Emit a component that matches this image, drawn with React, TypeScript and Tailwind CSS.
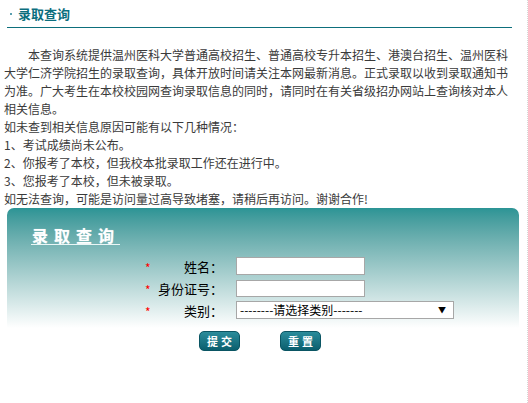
import React from "react";

const cjk = { fontFamily: '"Noto Sans CJK SC", "Noto Sans", sans-serif' };

function Row({ label, children }: { label: string; children: React.ReactNode }) {
  return (
    <div className="flex items-center h-[22px] pl-[138px]">
      <span className="w-[10px] text-[12px] text-[#ff0000] leading-none pt-[3px]">*</span>
      <span className="w-[68px] text-right text-[13px] text-black leading-none">{label}</span>
      <div className="ml-[13px] flex items-center">{children}</div>
    </div>
  );
}

export default function App() {
  return (
    <div
      className="w-[528px] h-[403px] bg-white border-r border-dotted border-[#d6d6d6] overflow-hidden"
      style={cjk}
    >
      {/* header */}
      <div className="pl-[7px]">
        <div className="h-[27px] flex items-center w-[505px]">
          <span className="ml-[3px] w-[2px] h-[2px] bg-[#5a9fb0] mt-[1px]" />
          <span className="ml-[6px] text-[13px] font-bold text-[#0b6e7e] leading-none">
            录取查询
          </span>
        </div>
        <div className="w-[505px] h-[1px] bg-[#0d6f7c]" />
      </div>

      {/* body text */}
      <div className="w-[512px] pl-[4px] pt-[18px] text-[12px] leading-[18px] text-[#3a3a3a]">
        <p className="indent-[24px]">
          本查询系统提供温州医科大学普通高校招生、普通高校专升本招生、港澳台招生、温州医科大学仁济学院招生的录取查询，具体开放时间请关注本网最新消息。正式录取以收到录取通知书为准。广大考生在本校校园网查询录取信息的同时，请同时在有关省级招办网站上查询核对本人相关信息。
        </p>
        <p>如未查到相关信息原因可能有以下几种情况：</p>
        <p>1、考试成绩尚未公布。</p>
        <p>2、你报考了本校，但我校本批录取工作还在进行中。</p>
        <p>3、您报考了本校，但未被录取。</p>
        <p>如无法查询，可能是访问量过高导致堵塞，请稍后再访问。谢谢合作!</p>
      </div>

      {/* panel */}
      <div className="ml-[7px] w-[512px] h-[120px] rounded-t-[7px] bg-gradient-to-b from-[#2b9495] to-[#ffffff]">
        <div className="flex pt-[19px] pl-[24px]">
          <span className="block pl-[1px] border-b border-[#eaf6f6] text-[16px] leading-[17px] font-bold text-white tracking-[6px] [text-shadow:0_0_1px_rgba(255,255,255,0.6)]">
            录取查询
          </span>
        </div>
        <div className="mt-[10px]">
          <Row label="姓名：">
            <div className="w-[129px] h-[18px] bg-white border border-[#a7a7a7]" />
          </Row>
          <Row label="身份证号：">
            <div className="w-[129px] h-[17px] bg-white border border-[#a7a7a7]" />
          </Row>
          <Row label="类别：">
            <div className="w-[218px] h-[18px] bg-white border border-[#a7a7a7] flex items-center justify-between pl-[3px] pr-[7px]">
              <span className="text-[12px] leading-none text-black">--------请选择类别-------</span>
              <span className="text-[8px] leading-none text-black">▼</span>
            </div>
          </Row>
        </div>
      </div>

      {/* buttons */}
      <div className="flex pl-[199px] gap-[40px] mt-[3px]">
        <button className="w-[41px] h-[20px] rounded-[5px] bg-gradient-to-b from-[#2a8c9b] to-[#0a5f6e] border border-[#0a5563] text-white text-[11px] font-bold tracking-[3px] pl-[3px] leading-none">
          提交
        </button>
        <button className="w-[41px] h-[20px] rounded-[5px] bg-gradient-to-b from-[#2a8c9b] to-[#0a5f6e] border border-[#0a5563] text-white text-[11px] font-bold tracking-[3px] pl-[3px] leading-none">
          重置
        </button>
      </div>
    </div>
  );
}
